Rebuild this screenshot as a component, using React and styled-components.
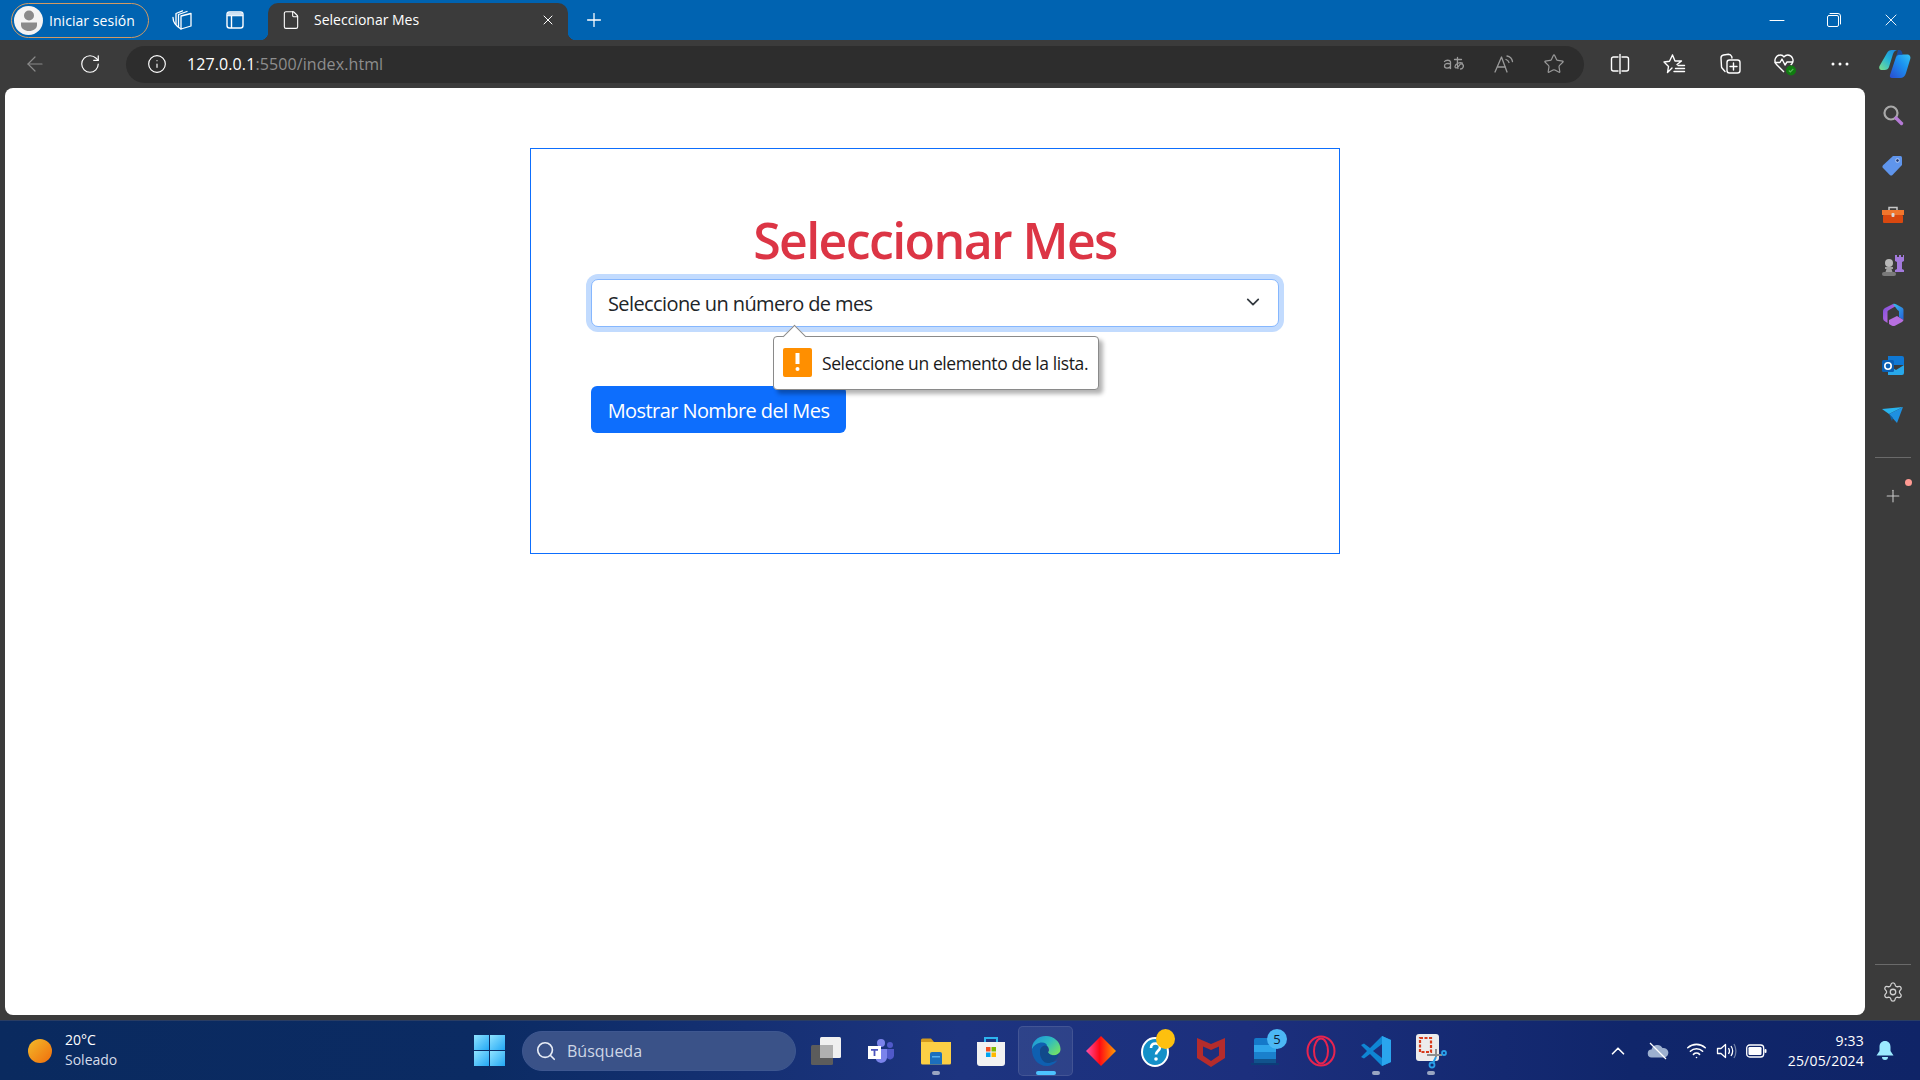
import React from "react";
import styled, { createGlobalStyle } from "styled-components";
import { ArrowLeft, RotateCw, Info, Star, X, Plus, Search, Settings, ChevronUp, Wifi, File } from "lucide-react";

const GlobalStyle = createGlobalStyle`
  html, body { margin: 0; padding: 0; overflow: hidden; background: #3b3b3b; }
  * { box-sizing: border-box; }
`;

const uiFont = `"Open Sans", "Noto Sans", sans-serif`;

const Screen = styled.div`
  width: 1920px;
  height: 1080px;
  display: flex;
  flex-direction: column;
  font-family: ${uiFont};
  overflow: hidden;
`;

/* ---------- tab strip ---------- */
const TabStrip = styled.div`
  height: 40px;
  flex: none;
  display: flex;
  align-items: center;
  padding: 0 1px 0 11px;
  background: #0063b1;
  color: #fff;
`;
const ProfilePill = styled.div`
  width: 138px;
  height: 35px;
  border: 1px solid #d29a62;
  border-radius: 18px;
  display: flex;
  align-items: center;
  gap: 6px;
  padding-left: 2px;
  font-size: 14px;
  letter-spacing: 0.05px;
  white-space: nowrap;
`;
const Avatar = styled.div`
  width: 29px;
  height: 29px;
  border-radius: 50%;
  background: #f4f4f4;
  display: flex;
  align-items: center;
  justify-content: center;
`;
const Cell = styled.div`
  width: ${(p) => p.$w || 55}px;
  height: ${(p) => p.$h || 40}px;
  margin-left: ${(p) => p.$ml || 0}px;
  flex: none;
  display: flex;
  align-items: center;
  justify-content: center;
  position: relative;
  color: ${(p) => p.$color || "#fff"};
`;
const Tab = styled.div`
  position: relative;
  width: 300px;
  height: 37px;
  margin: 3px 0 0 11px;
  flex: none;
  background: #3b3b3b;
  border-radius: 10px 10px 0 0;
  display: flex;
  align-items: center;
  padding: 0 12px 4px 13px;
  font-size: 14px;
  letter-spacing: 0;
  &::before, &::after {
    content: "";
    position: absolute;
    bottom: 0;
    width: 8px;
    height: 8px;
  }
  &::before { left: -8px; background: radial-gradient(circle at 0 0, transparent 8px, #3b3b3b 8.5px); }
  &::after { right: -8px; background: radial-gradient(circle at 100% 0, transparent 8px, #3b3b3b 8.5px); }
`;
const TabTitle = styled.span`
  margin-left: 13px;
  flex: 1;
`;
const WindowControls = styled.div`
  margin-left: auto;
  display: flex;
`;

/* ---------- address row ---------- */
const AddressRow = styled.div`
  height: 48px;
  flex: none;
  display: flex;
  align-items: center;
  padding-left: 7px;
  background: #3b3b3b;
`;
const AddressPill = styled.div`
  width: 1458px;
  height: 37px;
  margin-left: 9px;
  flex: none;
  border-radius: 19px;
  background: #2d2d2d;
  display: flex;
  align-items: center;
  padding: 0 5px 0 21px;
`;
const UrlText = styled.span`
  margin-left: 20px;
  font-size: 16px;
  letter-spacing: 0.1px;
  color: #8e8e8e;
  b { font-weight: 400; color: #fff; }
`;
const PillActions = styled.div`
  margin-left: auto;
  display: flex;
`;

/* ---------- middle ---------- */
const Middle = styled.div`
  flex: 1;
  min-height: 0;
  display: flex;
  padding-left: 5px;
  background: #3b3b3b;
`;
const PageArea = styled.main`
  width: 1860px;
  height: 927px;
  flex: none;
  background: #fff;
  border-radius: 8px;
  padding-top: 60px;
`;
const Card = styled.section`
  width: 810px;
  margin: 0 auto;
  border: 1px solid #0d6efd;
  padding: 61px 60px 120px;
  font-family: "Open Sans", "Noto Sans", sans-serif;
`;
const Title = styled.h1`
  margin: 0 0 9px;
  font-size: 50px;
  line-height: 60px;
  font-weight: 600;
  letter-spacing: -1.6px;
  text-align: center;
  color: #dc3545;
`;
const SelectWrap = styled.div`
  position: relative;
  margin-bottom: 59px;
`;
const MonthSelect = styled.select`
  display: block;
  width: 100%;
  height: 48px;
  padding: 0 16px;
  appearance: none;
  border: 1px solid #86b7fe;
  border-radius: 7px;
  box-shadow: 0 0 0 5px #c2dbfe;
  outline: none;
  background: #fff;
  font: 400 20px ${uiFont};
  letter-spacing: -0.6px;
  color: #212529;
`;
const Chevron = styled.svg`
  position: absolute;
  right: 19px;
  top: 16px;
`;
const Bubble = styled.div`
  position: absolute;
  left: 182px;
  top: 57px;
  width: 326px;
  height: 54px;
  background: #fff;
  border: 1px solid #8a8a8a;
  border-radius: 4px;
  box-shadow: 4px 4px 4px rgba(0, 0, 0, 0.3);
  display: flex;
  align-items: center;
  gap: 10px;
  padding-left: 9px;
  font-size: 17.5px;
  letter-spacing: -0.4px;
  color: #1a1a1a;
  z-index: 2;
  &::before {
    content: "";
    position: absolute;
    left: 12px;
    top: -9px;
    width: 16px;
    height: 16px;
    background: #fff;
    border-left: 1px solid #8a8a8a;
    border-top: 1px solid #8a8a8a;
    transform: rotate(45deg) scale(0.98);
  }
`;
const WarnBadge = styled.div`
  position: relative;
  width: 29px;
  height: 29px;
  margin-top: -2px;
  border-radius: 2px;
  background: #ff8f00;
  color: #fff;
  display: flex;
  align-items: center;
  justify-content: center;
`;
const PrimaryButton = styled.button`
  display: block;
  width: 255px;
  height: 47px;
  padding: 2px 0 0;
  border: none;
  border-radius: 6px;
  background: #0d6efd;
  color: #fff;
  font: 400 20px ${uiFont};
  letter-spacing: -0.57px;
`;

/* ---------- right sidebar ---------- */
const SideBar = styled.aside`
  width: 55px;
  flex: none;
  display: flex;
  flex-direction: column;
  padding-top: 2px;
`;
const SideDivider = styled.div`
  width: 36px;
  height: 1px;
  margin: ${(p) => p.$m};
  align-self: center;
  background: #6a6a6a;
`;
const RedDot = styled.span`
  position: absolute;
  top: 8px;
  right: 8px;
  width: 7px;
  height: 7px;
  border-radius: 50%;
  background: #ff9a92;
`;
const SideBottom = styled.div`
  margin-top: auto;
  padding-bottom: 3px;
  display: flex;
  flex-direction: column;
`;

/* ---------- taskbar ---------- */
const Taskbar = styled.footer`
  height: 60px;
  flex: none;
  display: flex;
  align-items: center;
  position: relative;
  padding: 0 14px 0 28px;
  border-top: 1px solid #2a3d63;
  background: linear-gradient(90deg, #0a2a5f 0%, #0b2b63 25%, #1d3480 50%, #1c2f7d 65%, #10266b 85%, #0f2467 100%);
  color: #fff;
`;
const Weather = styled.div`
  display: flex;
  align-items: center;
  gap: 13px;
  width: 446px;
  flex: none;
`;
const Sun = styled.div`
  width: 24px;
  height: 24px;
  border-radius: 50%;
  background: linear-gradient(135deg, #f3bb2a, #f06d0c);
`;
const WeatherText = styled.div`
  font-size: 14px;
  line-height: 20px;
  letter-spacing: 0;
  margin-top: -2px;
  span { display: block; color: #d5dcea; }
`;
const StartLogo = styled.div`
  width: 31px;
  height: 31px;
  flex: none;
  display: grid;
  grid-template-columns: 1fr 1fr;
  gap: 1.5px;
  i { display: block; background: linear-gradient(135deg, #8fe3ff, #22a8f5); }
`;
const SearchBox = styled.div`
  width: 274px;
  height: 40px;
  margin-left: 17px;
  flex: none;
  border-radius: 20px;
  border: 1px solid #3e5790;
  background: #3a5288;
  display: flex;
  align-items: center;
  gap: 10px;
  padding-left: 12px;
  font-size: 16px;
  letter-spacing: 0;
  color: #cfd7e6;
`;
const TaskIcons = styled.div`
  display: flex;
  margin-left: 2px;
`;
const TaskIcon = styled.div`
  position: relative;
  width: 55px;
  height: 50px;
  display: flex;
  align-items: center;
  justify-content: center;
  border-radius: 5px;
  border: ${(p) => (p.$active ? "1px solid rgba(255,255,255,0.1)" : "1px solid transparent")};
  background: ${(p) => (p.$active ? "rgba(255,255,255,0.08)" : "transparent")};
  &::after {
    content: "";
    display: ${(p) => (p.$dot || p.$active ? "block" : "none")};
    position: absolute;
    bottom: 0;
    left: 50%;
    transform: translateX(-50%);
    width: ${(p) => (p.$active ? 20 : 8)}px;
    height: 4px;
    border-radius: 2px;
    background: ${(p) => (p.$active ? "#4cc2ff" : "#9aa6c2")};
  }
`;
const CountBadge = styled.span`
  position: absolute;
  top: 2px;
  right: 5px;
  width: 20px;
  height: 20px;
  border-radius: 50%;
  background: #4cb8f5;
  color: #0c1a33;
  font-size: 13px;
  line-height: 20px;
  text-align: center;
`;
const YellowDot = styled.span`
  position: absolute;
  top: 2px;
  right: 7px;
  width: 19px;
  height: 20px;
  border-radius: 50%;
  background: #fdc00f;
`;
const Tray = styled.div`
  margin-left: auto;
  display: flex;
  align-items: center;
`;
const TrayCell = styled.div`
  width: ${(p) => p.$w}px;
  display: flex;
  justify-content: center;
`;
const Clock = styled.div`
  width: 92px;
  text-align: right;
  font-size: 14px;
  line-height: 20px;
  letter-spacing: 0.2px;
`;

const stroke = { fill: "none", stroke: "currentColor", strokeLinecap: "round", strokeLinejoin: "round" };

const ProfileGlyph = () => (
  <svg width="22" height="24" viewBox="0 0 22 24">
    <circle cx="11" cy="7.5" r="5" fill="#8a8a8a" />
    <path d="M3 14.5h16v2.5c0 3.5-3.5 6-8 6s-8-2.5-8-6z" fill="#8a8a8a" />
  </svg>
);
const WorkspacesGlyph = () => (
  <svg width="22" height="22" viewBox="0 0 22 22" {...stroke} strokeWidth="1.3">
    <path d="M10 7 20 4.500v12.500L10 20z" />
    <path d="M7.500 17.500V5.500L16 2.500" />
    <path d="M5 15V4.500L11.500 1.800" />
    <path d="M2 8.500c0 4 2 8 8 11.500" />
  </svg>
);
const VerticalTabsGlyph = () => (
  <svg width="20" height="20" viewBox="0 0 20 20" {...stroke} strokeWidth="1.4">
    <rect x="2" y="2" width="16" height="16" rx="2.5" />
    <path d="M2.5 5.5h15M6.5 6v11.5" />
    <path d="M2.5 2.5h15v3h-15z" fill="#cfe3f5" stroke="none" />
  </svg>
);
const MinimizeGlyph = () => (
  <svg width="16" height="16" viewBox="0 0 16 16" {...stroke}><path d="M1 8.5h14" /></svg>
);
const RestoreGlyph = () => (
  <svg width="16" height="16" viewBox="0 0 16 16" {...stroke}>
    <rect x="1.5" y="3.5" width="11" height="11" rx="1.5" />
    <path d="M4 1.5h8a2.5 2.5 0 0 1 2.5 2.5v8" />
  </svg>
);
const TranslateGlyph = () => (
  <svg width="22" height="20" viewBox="0 0 22 20" {...stroke} strokeWidth="1.3">
    <path d="M1.500 7.500c1-1.500 5.500-2 6 .5v6.500M7.500 10c-3-1-6-.5-6 2 0 3 4.500 2.500 6 .5" />
    <path d="M11.500 5.500h7M14.500 3.500c0 4-.5 8 .5 11M19.500 9c-3-1-7 .5-7.500 3.500 0 2.500 3 1.500 5-2 1-1.500 4.500 0 3 3-.5 1-1.500 1.500-2.500 1.500" />
  </svg>
);
const ReadAloudGlyph = () => (
  <svg width="22" height="20" viewBox="0 0 22 20" {...stroke} strokeWidth="1.3">
    <path d="M2 18 8.500 3 14 18M4.500 13h8" />
    <path d="M13 5.500c1.500.5 2.500 1.500 3 3M14 2c3 .5 5 3 5.500 5.500" />
  </svg>
);
const SplitGlyph = () => (
  <svg width="22" height="22" viewBox="0 0 22 22" {...stroke} strokeWidth="1.4">
    <path d="M9 4H4.500A2 2 0 0 0 2.500 6v10a2 2 0 0 0 2 2H9M13 4h4.500a2 2 0 0 1 2 2v10a2 2 0 0 1-2 2H13" />
    <path d="M11 1.500v19" />
  </svg>
);
const FavoritesGlyph = () => (
  <svg width="24" height="22" viewBox="0 0 24 22" {...stroke} strokeWidth="1.4">
    <path d="M9.500 2 12 8h6.500l-4.500 3.500M9 15l-4.500 4.500 1-6L1 9l5.500-.8L9.500 2" />
    <path d="M15 12.500h6.500M12.500 15.500h9M11 18.500h10.500" />
  </svg>
);
const CollectionsGlyph = () => (
  <svg width="24" height="24" viewBox="0 0 24 24" {...stroke} strokeWidth="1.4">
    <path d="M7 19.500 4 16a2 2 0 0 1-.5-1.500L3 6a3 3 0 0 1 2.500-3l5-.7c1.500 0 2.500.700 3.200 2.200L14 6" />
    <rect x="9" y="8" width="13" height="13" rx="2.500" />
    <path d="M15.500 11v7M12 14.500h7" />
  </svg>
);
const HealthGlyph = () => (
  <svg width="26" height="26" viewBox="0 0 26 26">
    <path d="M12 21 4.500 13.500C1 9.500 4 4 8.500 4c1.500 0 2.700.700 3.500 1.800C13 4.700 14.200 4 15.700 4c4.500 0 7 5.500 4 9l-1 1" fill="none" stroke="currentColor" strokeWidth="1.4" />
    <path d="M2.500 11.500H8L10 8l3 6 2-3h6" fill="none" stroke="currentColor" strokeWidth="1.4" strokeLinejoin="round" />
    <circle cx="19" cy="19.500" r="5" fill="#107c10" />
    <path d="m16.800 19.500 1.500 1.500 3-3" fill="none" stroke="#57b657" strokeWidth="1.1" />
  </svg>
);
const DotsGlyph = () => (
  <svg width="20" height="6" viewBox="0 0 20 6" fill="currentColor">
    <circle cx="3" cy="3" r="1.500" /><circle cx="10" cy="3" r="1.500" /><circle cx="17" cy="3" r="1.500" />
  </svg>
);
const CopilotGlyph = () => (
  <svg width="32" height="30" viewBox="0 0 32 30">
    <defs>
      <linearGradient id="cpA" x1="0" y1="1" x2="1" y2="0">
        <stop offset="0" stopColor="#7de08a" /><stop offset="0.5" stopColor="#25b5d8" /><stop offset="1" stopColor="#1a7fe0" />
      </linearGradient>
      <linearGradient id="cpB" x1="0" y1="1" x2="1" y2="0">
        <stop offset="0" stopColor="#2a4bd0" /><stop offset="0.6" stopColor="#1b93f0" /><stop offset="1" stopColor="#35c1f1" />
      </linearGradient>
    </defs>
    <path d="M8 4c1-2 2.500-3 5-3h6c-2.500 0-4 1.200-5 4l-4 13c-.7 2-2 3-4.500 3H2.500C.5 21-.3 19 .5 17z" fill="url(#cpA)" />
    <path d="M13 29c-2 0-2.500-1.500-2-3l6-18c.7-2 2-2.500 4-2.500h7c2.500 0 4 2 3.300 4.300L27 24c-1 3.200-2.800 5-6 5z" fill="url(#cpB)" />
    <path d="M19 1h1c2.500 0 3.600 2 3.500 5H21c-2 0-3.300.5-4 2.500l-1 3z" fill="#1450b8" opacity="0.75" />
  </svg>
);
const LensGlyph = () => (
  <svg width="22" height="22" viewBox="0 0 22 22">
    <circle cx="9" cy="9" r="6.500" fill="none" stroke="#a8a8a8" strokeWidth="2.200" />
    <path d="m14 14 5.500 5.500" stroke="#b57ad6" strokeWidth="3.400" strokeLinecap="round" />
  </svg>
);
const TagGlyph = () => (
  <svg width="21" height="21" viewBox="0 0 21 21">
    <path d="M11 1h7.500A1.500 1.500 0 0 1 20 2.500V10L10.500 20a2 2 0 0 1-2.700 0L1 13a2 2 0 0 1 0-2.700z" fill="#5f95ec" />
    <circle cx="15.500" cy="5.500" r="1.800" fill="#1e3a78" stroke="#cfe0fb" strokeWidth="0.800" />
  </svg>
);
const ToolboxGlyph = () => (
  <svg width="22" height="20" viewBox="0 0 22 20">
    <path d="M7 5V2.500h8V5" fill="none" stroke="#c8c8c8" strokeWidth="1.500" />
    <rect x="0" y="5" width="22" height="5" fill="#f0762d" />
    <rect x="1" y="10" width="20" height="8" rx="1" fill="#d9480f" />
    <rect x="9.500" y="8" width="3" height="4" rx="1" fill="#d8d8d8" />
  </svg>
);
const ChessGlyph = () => (
  <svg width="24" height="24" viewBox="0 0 24 24">
    <path d="M14 2h2v2h2V2h2v2h2V2h1v6l-2 1v7l2 1v2h-9v-2l2-1V9l-2-1z" fill="#a37adc" />
    <circle cx="8" cy="10" r="4" fill="#b8b8b8" />
    <path d="M4 14h8v2h-1.500l1 3h-7l1-3H4z" fill="#a0a0a0" />
    <rect x="1" y="19" width="14" height="4" rx="2" fill="#7a7a7a" />
  </svg>
);
const Office365Glyph = () => (
  <svg width="22" height="24" viewBox="0 0 22 24">
    <defs>
      <linearGradient id="ofA" x1="0" y1="0" x2="1" y2="1">
        <stop offset="0" stopColor="#7a4de0" /><stop offset="1" stopColor="#d071d8" />
      </linearGradient>
      <linearGradient id="ofB" x1="0" y1="0" x2="1" y2="1">
        <stop offset="0" stopColor="#37c0ef" /><stop offset="1" stopColor="#2560d8" />
      </linearGradient>
    </defs>
    <path d="M11 1 3 5C1 6 1 8 1 9v6c0 1 .5 2.500 1.500 3l3 2V9c0-1 .5-1.500 1.500-2l7-4z" fill="url(#ofA)" />
    <path d="M11 1c1-.5 2-.300 3 .200l6 3.300c1 .500 1.500 1.500 1.500 2.500v10L17 14V9c0-1-.5-1.500-1.500-2z" fill="url(#ofB)" />
    <path d="M7 21l3 1.700c1 .5 2 .5 3 0l7-3.700c.8-.5 1.300-1.300 1.500-2L15 13 7 17z" fill="#b76fe0" />
  </svg>
);
const OutlookGlyph = () => (
  <svg width="22" height="20" viewBox="0 0 22 20">
    <path d="M6 1h14a2 2 0 0 1 2 2v7H6z" fill="#0f78d4" />
    <path d="M6 10l8 5 8-5v8a2 2 0 0 1-2 2H6z" fill="#28a8ea" />
    <rect x="0" y="5" width="12" height="12" rx="1.500" fill="#0a5fb4" />
    <circle cx="6" cy="11" r="3.200" fill="none" stroke="#fff" strokeWidth="1.600" />
  </svg>
);
const SendGlyph = () => (
  <svg width="22" height="18" viewBox="0 0 22 18">
    <path d="M0 3 21 1 7 8z" fill="#28b4ee" />
    <path d="M21 1 7 8l8 9z" fill="#1e90e0" />
    <path d="M7 8 10 15l1-3z" fill="#0b5fa8" />
  </svg>
);
const WarnMark = () => (
  <svg width="5" height="18" viewBox="0 0 5 18" fill="#fff">
    <rect x="0.500" y="0" width="4" height="11" />
    <rect x="0.500" y="14" width="4" height="4" rx="2" />
  </svg>
);
const DesktopSwitchGlyph = () => (
  <svg width="32" height="30" viewBox="0 0 32 30">
    <rect x="10" y="1" width="21" height="21" rx="1.500" fill="#f0f0f0" />
    <rect x="1" y="9" width="22" height="20" rx="1.500" fill="#5c5c5c" />
    <rect x="10" y="9" width="13" height="13" fill="#b0b0b0" />
  </svg>
);
const TeamsGlyph = () => (
  <svg width="28" height="26" viewBox="0 0 28 26">
    <circle cx="14" cy="5" r="4" fill="#7b83eb" />
    <circle cx="23" cy="7" r="3" fill="#5059c9" />
    <path d="M9 11h11v9a6 6 0 0 1-11 2z" fill="#7b83eb" />
    <path d="M20 11h7v7a4 4 0 0 1-7 2z" fill="#5059c9" />
    <rect x="1" y="8" width="13" height="13" fill="#fff" />
    <path d="M4 11h7v1.800H8.400V18H6.600v-5.200H4z" fill="#4b53bc" />
  </svg>
);
const FolderGlyph = () => (
  <svg width="30" height="28" viewBox="0 0 30 28">
    <path d="M0 3a1.500 1.500 0 0 1 1.500-1.500H10L13 5H0z" fill="#d39a1d" />
    <path d="M0 5h30v21a1.500 1.500 0 0 1-1.500 1.500h-27A1.500 1.500 0 0 1 0 26z" fill="#fccf45" />
    <path d="M9 17a2 2 0 0 1 2-2h8a2 2 0 0 1 2 2v10.500H9z" fill="#1c6fbd" />
    <rect x="11" y="19" width="8" height="1.500" fill="#57b0f0" />
  </svg>
);
const StoreGlyph = () => (
  <svg width="28" height="30" viewBox="0 0 28 30">
    <path d="M8 6V2h12v4" fill="none" stroke="#2db4ee" strokeWidth="2" />
    <path d="M0 6h28v21a3 3 0 0 1-3 3H3a3 3 0 0 1-3-3z" fill="#f2f2f2" />
    <rect x="9" y="11" width="4.500" height="4.500" fill="#f25022" />
    <rect x="14.500" y="11" width="4.500" height="4.500" fill="#7fba00" />
    <rect x="9" y="16.500" width="4.500" height="4.500" fill="#00a4ef" />
    <rect x="14.500" y="16.500" width="4.500" height="4.500" fill="#ffb900" />
  </svg>
);
const EdgeGlyph = () => (
  <svg width="30" height="32" viewBox="0 0 30 32">
    <defs>
      <linearGradient id="edA" x1="0" y1="0" x2="1" y2="0.700">
        <stop offset="0" stopColor="#1b8fdc" /><stop offset="0.55" stopColor="#2fbcc0" /><stop offset="1" stopColor="#6fe06a" />
      </linearGradient>
    </defs>
    <path d="M15 1C23 1 29.500 7 29.500 14c0 4-3 6.500-7 6.500-3 0-5.500-1.500-5.500-3 0-1 1-1 1-2.500C18 12 15.500 10 13 10c-5 0-8 4-12 6C0 7 6.500 1 15 1z" fill="url(#edA)" />
    <path d="M1 14c2-4 6-6.500 10-6.500 3 0 5 1.500 5 3.500-4-1-7 1.500-7 6 0 6 5 10 11 10 2.500 0 4.500-.5 6.500-2-2.500 4-7 6-11 6C7 31 .5 23 1 14z" fill="#0f5fb0" />
    <path d="M9 17c0-4.500 3-7 7-6 1.500 1.500 0 3 .5 5 .5 2.500 4 5 8 4 1.500-.3 3-1 4-2.500-1 4-3.500 7-5.500 8.500-2 1.500-4 2-6 2-5 0-8-5-8-11z" fill="#114a8b" />
  </svg>
);
const DiamondGlyph = () => (
  <svg width="30" height="30" viewBox="0 0 30 30">
    <defs>
      <linearGradient id="dmA" x1="0" y1="0" x2="1" y2="0">
        <stop offset="0" stopColor="#ff4fa8" /><stop offset="0.45" stopColor="#ff0a14" /><stop offset="1" stopColor="#ff9d00" />
      </linearGradient>
    </defs>
    <path d="M15 0 30 15 15 30 0 15z" fill="url(#dmA)" />
  </svg>
);
const HelpGlyph = () => (
  <svg width="30" height="32" viewBox="0 0 30 32">
    <ellipse cx="14" cy="17" rx="13" ry="14" fill="#1490c8" stroke="#fff" strokeWidth="2" />
    <path d="M10 13c0-3 2-4.500 4.500-4.500S19 10 19 12.500c0 3-4 3.500-4 7" fill="none" stroke="#fff" strokeWidth="2.600" />
    <circle cx="15" cy="24" r="1.800" fill="#fff" />
  </svg>
);
const McAfeeGlyph = () => (
  <svg width="28" height="32" viewBox="0 0 28 32">
    <path d="M0 3 14 9 28 3v20L14 32 0 23z" fill="#b52c2c" />
    <path d="M6 11.500 14 15l8-3.500v9L14 26l-8-5.500z" fill="#1c2f7d" />
  </svg>
);
const PhoneLinkGlyph = () => (
  <svg width="30" height="32" viewBox="0 0 30 32">
    <rect x="3" y="3" width="22" height="26" rx="2" fill="#1479c9" />
    <rect x="3" y="10" width="22" height="7" fill="#2ea5ea" />
    <rect x="3" y="17" width="22" height="7" fill="#1a80cc" />
    <rect x="3" y="24" width="22" height="6" fill="#11538d" />
    <rect x="0" y="28" width="28" height="2" fill="#0c3d78" />
  </svg>
);
const OperaGlyph = () => (
  <svg width="30" height="32" viewBox="0 0 30 32" fill="none" stroke="#e8244f" strokeWidth="2">
    <ellipse cx="15" cy="16" rx="13.500" ry="14.500" />
    <ellipse cx="15" cy="16" rx="7" ry="12.500" />
  </svg>
);
const VsCodeGlyph = () => (
  <svg width="30" height="30" viewBox="0 0 30 30">
    <path d="M21 0 9 12 3 7.500 0 9l6 6-6 6 3 1.500L9 18l12 12 9-4V4z" fill="#0f86d4" />
    <path d="M21 0 30 4v22l-9 4z" fill="#2aa5ee" />
    <path d="M21 8 12 15l9 7z" fill="#1c2f7d" />
  </svg>
);
const SnipGlyph = () => (
  <svg width="32" height="36" viewBox="0 0 32 36">
    <rect x="1" y="1" width="23" height="27" rx="3" fill="#ececec" />
    <rect x="5" y="5" width="11" height="14" fill="none" stroke="#d83b1c" strokeWidth="2.200" strokeDasharray="3 1.500" />
    <path d="M12 22h15M21 16v8" stroke="#8d8d8d" strokeWidth="2" />
    <path d="M21 24 18 30" stroke="#2aa0e8" strokeWidth="2" />
    <circle cx="17" cy="32" r="2.500" fill="none" stroke="#2aa0e8" strokeWidth="1.800" />
    <circle cx="29" cy="20" r="2" fill="none" stroke="#2aa0e8" strokeWidth="1.800" />
  </svg>
);
const CloudOffGlyph = () => (
  <svg width="22" height="18" viewBox="0 0 22 18">
    <path d="M5 15.500a4 4 0 0 1-.5-8 6 6 0 0 1 11-1.500 4.800 4.800 0 0 1 2 9.500z" fill="#9db0cf" />
    <path d="M3 1l16 16" stroke="#fff" strokeWidth="1.300" />
  </svg>
);
const SpeakerGlyph = () => (
  <svg width="22" height="18" viewBox="0 0 22 18" fill="none" stroke="#fff" strokeWidth="1.300">
    <path d="M1.500 6.500h3.500L9.500 2.500v13L5 11.500H1.500z" strokeLinejoin="round" />
    <path d="M12.500 6c1.200 1.800 1.200 4.200 0 6M15 4c2 3 2 7 0 10" />
    <path d="M18 2c2.500 4 2.500 10 0 14" stroke="#6f7fa5" />
  </svg>
);
const BatteryGlyph = () => (
  <svg width="21" height="14" viewBox="0 0 21 14">
    <rect x="0.700" y="1" width="17" height="12" rx="3" fill="none" stroke="#fff" strokeWidth="1.300" />
    <rect x="2.500" y="3" width="13" height="8" rx="1.200" fill="#fff" />
    <rect x="18.500" y="5" width="2" height="4" rx="1" fill="#fff" />
  </svg>
);
const BellGlyph = () => (
  <svg width="18" height="20" viewBox="0 0 18 20" fill="#9be9ff">
    <path d="M9 0c3.500 0 5.500 2.500 5.500 6v4l3 4.500H.5l3-4.500V6C3.500 2.500 5.500 0 9 0z" />
    <path d="M6 16h6a3 3 0 0 1-6 0z" />
  </svg>
);

const taskIcons = [
  { key: "desk", icon: <DesktopSwitchGlyph /> },
  { key: "teams", icon: <TeamsGlyph /> },
  { key: "folder", icon: <FolderGlyph />, dot: true },
  { key: "store", icon: <StoreGlyph /> },
  { key: "edge", icon: <EdgeGlyph />, active: true },
  { key: "diamond", icon: <DiamondGlyph /> },
  { key: "help", icon: <HelpGlyph />, extra: <YellowDot /> },
  { key: "mcafee", icon: <McAfeeGlyph /> },
  { key: "phone", icon: <PhoneLinkGlyph />, extra: <CountBadge>5</CountBadge> },
  { key: "opera", icon: <OperaGlyph /> },
  { key: "code", icon: <VsCodeGlyph />, dot: true },
  { key: "snip", icon: <SnipGlyph />, dot: true },
];

const sideIcons = [
  { key: "lens", icon: <LensGlyph /> },
  { key: "tag", icon: <TagGlyph /> },
  { key: "tools", icon: <ToolboxGlyph /> },
  { key: "chess", icon: <ChessGlyph /> },
  { key: "office", icon: <Office365Glyph /> },
  { key: "outlook", icon: <OutlookGlyph /> },
  { key: "send", icon: <SendGlyph /> },
];

const App = () => {
  return (
    <Screen>
      <GlobalStyle />
      <TabStrip>
        <ProfilePill>
          <Avatar><ProfileGlyph /></Avatar>
          Iniciar sesión
        </ProfilePill>
        <Cell $w={44} $ml={11}><WorkspacesGlyph /></Cell>
        <Cell $w={44} $ml={9}><VerticalTabsGlyph /></Cell>
        <Tab>
          <File size={20} strokeWidth={1.3} />
          <TabTitle>Seleccionar Mes</TabTitle>
          <X size={16} strokeWidth={1.5} />
        </Tab>
        <Cell $w={44} $ml={4}><Plus size={22} strokeWidth={1.4} /></Cell>
        <WindowControls>
          <Cell $w={57}><MinimizeGlyph /></Cell>
          <Cell $w={57}><RestoreGlyph /></Cell>
          <Cell $w={57}><X size={20} strokeWidth={1.1} /></Cell>
        </WindowControls>
      </TabStrip>

      <AddressRow>
        <Cell $color="#8a8a8a"><ArrowLeft size={24} strokeWidth={1.2} /></Cell>
        <Cell><RotateCw size={22} strokeWidth={1.3} /></Cell>
        <AddressPill>
          <Info size={20} strokeWidth={1.4} color="#fff" />
          <UrlText><b>127.0.0.1</b>:5500/index.html</UrlText>
          <PillActions>
            <Cell $w={50} $h={37} $color="#9a9a9a"><TranslateGlyph /></Cell>
            <Cell $w={50} $h={37} $color="#9a9a9a"><ReadAloudGlyph /></Cell>
            <Cell $w={50} $h={37} $color="#9a9a9a"><Star size={22} strokeWidth={1.3} /></Cell>
          </PillActions>
        </AddressPill>
        <Cell $ml={8}><SplitGlyph /></Cell>
        <Cell><FavoritesGlyph /></Cell>
        <Cell><CollectionsGlyph /></Cell>
        <Cell><HealthGlyph /></Cell>
        <Cell><DotsGlyph /></Cell>
        <Cell><CopilotGlyph /></Cell>
      </AddressRow>

      <Middle>
        <PageArea>
          <Card>
            <Title>Seleccionar Mes</Title>
            <SelectWrap>
              <MonthSelect defaultValue="">
                <option value="">Seleccione un número de mes</option>
              </MonthSelect>
              <Chevron width="14" height="14" viewBox="0 0 16 16" fill="none" stroke="#343a40" strokeWidth="2" strokeLinecap="round" strokeLinejoin="round">
                <path d="m2 5 6 6 6-6" />
              </Chevron>
              <Bubble>
                <WarnBadge><WarnMark /></WarnBadge>
                Seleccione un elemento de la lista.
              </Bubble>
            </SelectWrap>
            <PrimaryButton type="button">Mostrar Nombre del Mes</PrimaryButton>
          </Card>
        </PageArea>
        <SideBar>
          {sideIcons.map((s) => (
            <Cell key={s.key} $h={50}>{s.icon}</Cell>
          ))}
          <SideDivider $m="17px 0 13px" />
          <Cell $h={50} $color="#c8c8c8">
            <Plus size={20} strokeWidth={1.3} />
            <RedDot />
          </Cell>
          <SideBottom>
            <SideDivider $m="0 0 2px" />
            <Cell $h={50} $color="#d0d0d0"><Settings size={22} strokeWidth={1.4} /></Cell>
          </SideBottom>
        </SideBar>
      </Middle>

      <Taskbar>
        <Weather>
          <Sun />
          <WeatherText>20°C<span>Soleado</span></WeatherText>
        </Weather>
        <StartLogo><i /><i /><i /><i /></StartLogo>
        <SearchBox>
          <Search size={22} strokeWidth={1.8} color="#e8edf6" />
          Búsqueda
        </SearchBox>
        <TaskIcons>
          {taskIcons.map((t) => (
            <TaskIcon key={t.key} $active={t.active} $dot={t.dot}>
              {t.icon}
              {t.extra}
            </TaskIcon>
          ))}
        </TaskIcons>
        <Tray>
          <TrayCell $w={40}><ChevronUp size={22} strokeWidth={1.8} /></TrayCell>
          <TrayCell $w={40}><CloudOffGlyph /></TrayCell>
          <TrayCell $w={36}><Wifi size={21} strokeWidth={1.8} /></TrayCell>
          <TrayCell $w={26}><SpeakerGlyph /></TrayCell>
          <TrayCell $w={32}><BatteryGlyph /></TrayCell>
          <Clock>9:33<br />25/05/2024</Clock>
          <TrayCell $w={42}><BellGlyph /></TrayCell>
        </Tray>
      </Taskbar>
    </Screen>
  );
};

export default App;
